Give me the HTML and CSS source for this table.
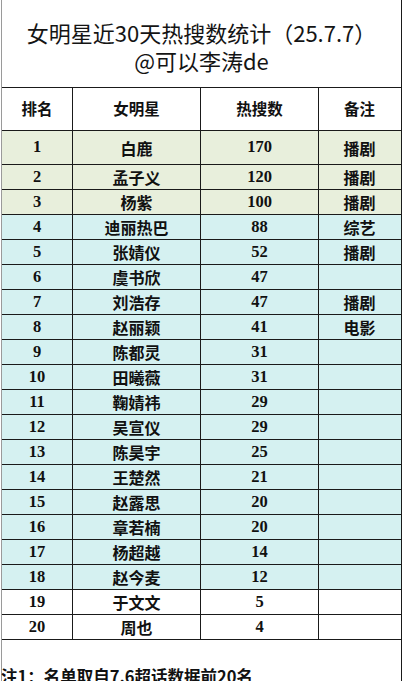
FILE: index.html
```html
<!DOCTYPE html>
<html lang="zh-CN">
<head>
<meta charset="utf-8">
<title>女明星近30天热搜数统计</title>
<link rel="stylesheet" href="styles.css">
</head>
<body>
<div class="sheet">
  <div class="title">
    <div class="title-line">女明星近30天热搜数统计（25.7.7）</div>
    <div class="title-line">@可以李涛de</div>
  </div>
  <div class="row head">
    <div class="cell">排名</div><div class="cell">女明星</div><div class="cell">热搜数</div><div class="cell">备注</div>
  </div>
  <div class="row green first"><div class="cell num">1</div><div class="cell">白鹿</div><div class="cell num">170</div><div class="cell">播剧</div></div>
  <div class="row green"><div class="cell num">2</div><div class="cell">孟子义</div><div class="cell num">120</div><div class="cell">播剧</div></div>
  <div class="row green"><div class="cell num">3</div><div class="cell">杨紫</div><div class="cell num">100</div><div class="cell">播剧</div></div>
  <div class="row cyan"><div class="cell num">4</div><div class="cell">迪丽热巴</div><div class="cell num">88</div><div class="cell">综艺</div></div>
  <div class="row cyan"><div class="cell num">5</div><div class="cell">张婧仪</div><div class="cell num">52</div><div class="cell">播剧</div></div>
  <div class="row cyan"><div class="cell num">6</div><div class="cell">虞书欣</div><div class="cell num">47</div><div class="cell"></div></div>
  <div class="row cyan"><div class="cell num">7</div><div class="cell">刘浩存</div><div class="cell num">47</div><div class="cell">播剧</div></div>
  <div class="row cyan"><div class="cell num">8</div><div class="cell">赵丽颖</div><div class="cell num">41</div><div class="cell">电影</div></div>
  <div class="row cyan"><div class="cell num">9</div><div class="cell">陈都灵</div><div class="cell num">31</div><div class="cell"></div></div>
  <div class="row cyan"><div class="cell num">10</div><div class="cell">田曦薇</div><div class="cell num">31</div><div class="cell"></div></div>
  <div class="row cyan"><div class="cell num">11</div><div class="cell">鞠婧祎</div><div class="cell num">29</div><div class="cell"></div></div>
  <div class="row cyan"><div class="cell num">12</div><div class="cell">吴宣仪</div><div class="cell num">29</div><div class="cell"></div></div>
  <div class="row cyan"><div class="cell num">13</div><div class="cell">陈昊宇</div><div class="cell num">25</div><div class="cell"></div></div>
  <div class="row cyan"><div class="cell num">14</div><div class="cell">王楚然</div><div class="cell num">21</div><div class="cell"></div></div>
  <div class="row cyan"><div class="cell num">15</div><div class="cell">赵露思</div><div class="cell num">20</div><div class="cell"></div></div>
  <div class="row cyan"><div class="cell num">16</div><div class="cell">章若楠</div><div class="cell num">20</div><div class="cell"></div></div>
  <div class="row cyan"><div class="cell num">17</div><div class="cell">杨超越</div><div class="cell num">14</div><div class="cell"></div></div>
  <div class="row cyan"><div class="cell num">18</div><div class="cell">赵今麦</div><div class="cell num">12</div><div class="cell"></div></div>
  <div class="row"><div class="cell num">19</div><div class="cell">于文文</div><div class="cell num">5</div><div class="cell"></div></div>
  <div class="row"><div class="cell num">20</div><div class="cell">周也</div><div class="cell num">4</div><div class="cell"></div></div>
  <div class="note">注1：名单取自7.6超话数据前20名</div>
</div>
</body>
</html>
```

FILE: styles.css
```css
html, body {
  margin: 0;
  padding: 0;
  background: #ffffff;
  overflow: hidden;
}

body {
  font-family: "Noto Sans CJK SC", "Noto Sans", sans-serif;
  color: #111111;
}

.sheet {
  box-sizing: border-box;
  width: 401px;
  margin-left: 1px;
  border-left: 1px solid #9a9a9a;
  border-right: 1px solid #1a1a1a;
  background: #ffffff;
}

.title {
  box-sizing: border-box;
  height: 88px;
  padding-top: 18px;
  border-bottom: 1px solid #1a1a1a;
  text-align: center;
  font-size: 22px;
  line-height: 28px;
  font-weight: 400;
  color: #141414;
}

.row {
  box-sizing: border-box;
  display: grid;
  grid-template-columns: 71px 128px 118px 81px;
  height: 25px;
  border-bottom: 1px solid #1a1a1a;
}

.row.head {
  height: 43px;
  background: #ffffff;
}

.row.head .cell {
  font-size: 15.5px;
}

.row.first {
  height: 34px;
}

.row.green {
  background: #e8efdc;
}

.row.cyan {
  background: #d5f1f1;
}

.cell {
  display: flex;
  align-items: center;
  justify-content: center;
  font-size: 16px;
  font-weight: 700;
  line-height: 1;
  color: #111111;
}

.cell:not(:last-child) {
  border-right: 1px solid #1a1a1a;
}

.cell.num {
  font-family: "Liberation Serif", "Noto Sans CJK SC", serif;
  font-size: 16.5px;
}

.note {
  padding-top: 26px;
  margin-left: -1px;
  height: 60px;
  font-size: 16.5px;
  line-height: 20px;
  font-weight: 700;
  color: #111111;
  white-space: nowrap;
}
```
